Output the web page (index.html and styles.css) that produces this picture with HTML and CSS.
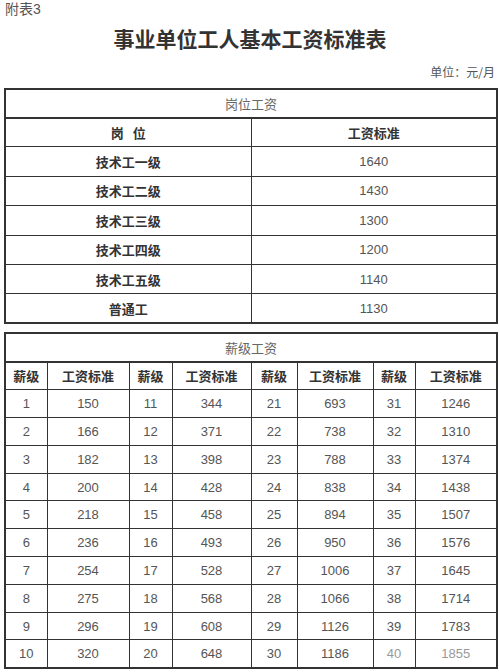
FILE: index.html
```html
<!DOCTYPE html>
<html lang="zh">
<head>
<meta charset="utf-8">
<title>事业单位工人基本工资标准表</title>
<link rel="stylesheet" href="styles.css">
</head>
<body>
<div class="page">
  <div class="note">附表3</div>
  <h1 class="title">事业单位工人基本工资标准表</h1>
  <div class="unit">单位：元/月</div>

  <table class="tbl tbl-post">
    <colgroup><col class="c-half"><col class="c-half"></colgroup>
    <tr class="cap"><td colspan="2">岗位工资</td></tr>
    <tr class="head"><th>岗&nbsp;&nbsp;&nbsp;位</th><th>工资标准</th></tr>
    <tr><th>技术工一级</th><td>1640</td></tr>
    <tr><th>技术工二级</th><td>1430</td></tr>
    <tr><th>技术工三级</th><td>1300</td></tr>
    <tr><th>技术工四级</th><td>1200</td></tr>
    <tr><th>技术工五级</th><td>1140</td></tr>
    <tr><th>普通工</th><td>1130</td></tr>
  </table>

  <table class="tbl tbl-scale">
    <colgroup>
      <col class="c1"><col class="c2"><col class="c3"><col class="c4">
      <col class="c5"><col class="c6"><col class="c7"><col class="c8">
    </colgroup>
    <tr class="cap"><td colspan="8">薪级工资</td></tr>
    <tr class="head"><th>薪级</th><th>工资标准</th><th>薪级</th><th>工资标准</th><th>薪级</th><th>工资标准</th><th>薪级</th><th>工资标准</th></tr>
    <tr><td>1</td><td>150</td><td>11</td><td>344</td><td>21</td><td>693</td><td>31</td><td>1246</td></tr>
    <tr><td>2</td><td>166</td><td>12</td><td>371</td><td>22</td><td>738</td><td>32</td><td>1310</td></tr>
    <tr><td>3</td><td>182</td><td>13</td><td>398</td><td>23</td><td>788</td><td>33</td><td>1374</td></tr>
    <tr><td>4</td><td>200</td><td>14</td><td>428</td><td>24</td><td>838</td><td>34</td><td>1438</td></tr>
    <tr><td>5</td><td>218</td><td>15</td><td>458</td><td>25</td><td>894</td><td>35</td><td>1507</td></tr>
    <tr><td>6</td><td>236</td><td>16</td><td>493</td><td>26</td><td>950</td><td>36</td><td>1576</td></tr>
    <tr><td>7</td><td>254</td><td>17</td><td>528</td><td>27</td><td>1006</td><td>37</td><td>1645</td></tr>
    <tr><td>8</td><td>275</td><td>18</td><td>568</td><td>28</td><td>1066</td><td>38</td><td>1714</td></tr>
    <tr><td>9</td><td>296</td><td>19</td><td>608</td><td>29</td><td>1126</td><td>39</td><td>1783</td></tr>
    <tr><td>10</td><td>320</td><td>20</td><td>648</td><td>30</td><td>1186</td><td class="faded">40</td><td class="faded">1855</td></tr>
  </table>
</div>
</body>
</html>
```

FILE: styles.css
```css
html, body {
  margin: 0;
  padding: 0;
  background: #ffffff;
}

.page {
  width: 492px;
  padding: 0 4px;
  font-family: "Liberation Sans", "Noto Sans CJK SC", sans-serif;
  color: #555;
}

.note {
  height: 18px;
  line-height: 18px;
  font-size: 14px;
  color: #555;
  padding-left: 1px;
}

.title {
  margin: 6px 0 0;
  height: 28px;
  line-height: 28px;
  font-size: 21px;
  font-weight: bold;
  color: #333;
  text-align: center;
  font-family: "Noto Sans CJK SC", sans-serif;
}

.unit {
  margin-top: 12px;
  height: 16px;
  line-height: 16px;
  font-size: 12px;
  color: #555;
  text-align: right;
  padding-right: 1px;
  font-family: "Noto Sans CJK SC", sans-serif;
}

.tbl {
  width: 492px;
  border-collapse: collapse;
  table-layout: fixed;
  border: 2px solid #333;
  margin-top: 8px;
}

.tbl td, .tbl th {
  border: 1px solid #333;
  padding: 0;
  text-align: center;
  font-size: 13px;
  color: #555;
  font-weight: normal;
}

.tbl th {
  font-family: "Noto Sans CJK SC", sans-serif;
  font-weight: bold;
  color: #333;
}

.tbl .cap td {
  color: #666;
  font-family: "Noto Sans CJK SC", sans-serif;
  border-bottom: 2px solid #333;
}

.tbl-post .c-half { width: 246px; }
.tbl-post tr { height: 29.4px; }
.tbl-post .cap { height: 28.5px; }

.tbl-scale { margin-top: 8px; }
.tbl-scale tr { height: 27.8px; }
.tbl-scale .cap { height: 28.5px; }
.tbl-scale .head { height: 28px; }
.tbl-scale .c1 { width: 42px; }
.tbl-scale .c2 { width: 82px; }
.tbl-scale .c3 { width: 43px; }
.tbl-scale .c4 { width: 79px; }
.tbl-scale .c5 { width: 46px; }
.tbl-scale .c6 { width: 76px; }
.tbl-scale .c7 { width: 42px; }
.tbl-scale .c8 { width: 82px; }

.tbl .faded { color: #999; }
```
